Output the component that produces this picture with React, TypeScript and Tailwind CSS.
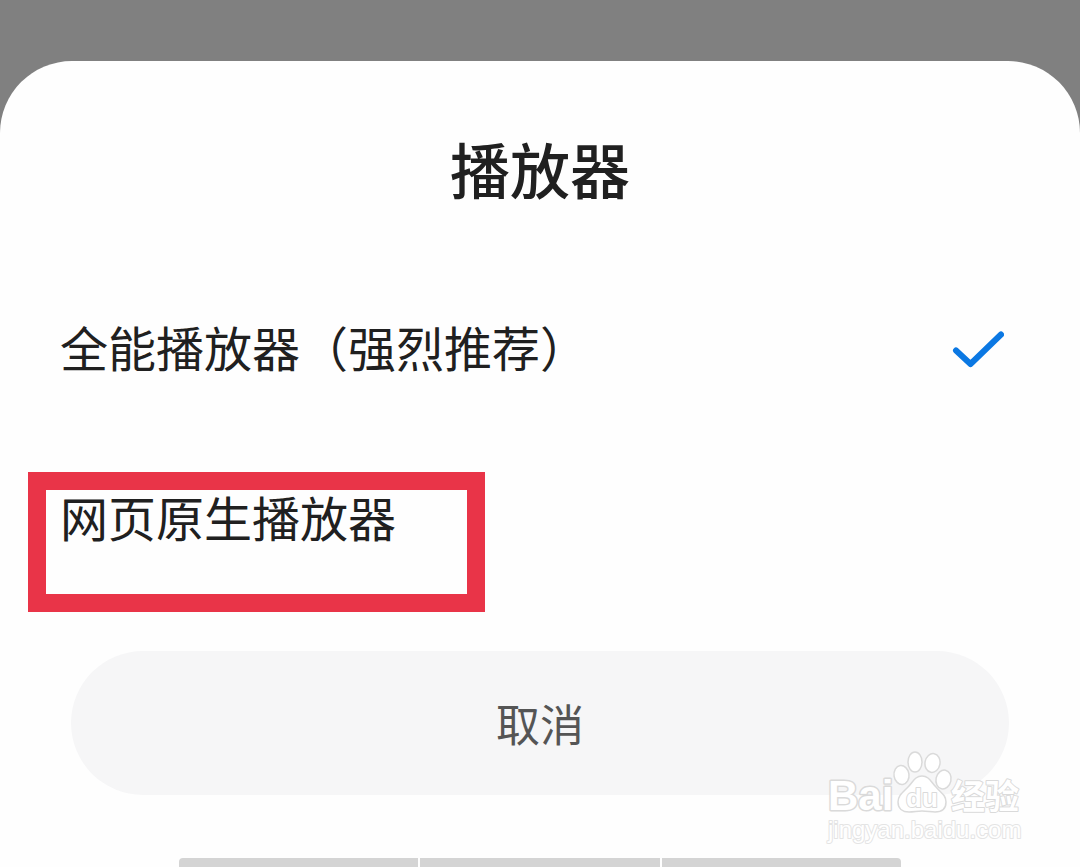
import { useState } from "react";

const PLAYERS = [
  { id: "universal", label: "全能播放器（强烈推荐）" },
  { id: "native", label: "网页原生播放器", highlighted: true },
];

function CheckIcon() {
  return (
    <svg viewBox="0 0 52 44" className="h-11 w-[52px] shrink-0" fill="none" aria-hidden="true">
      <path
        d="M4 26.500 L18.500 40 L49 10.500"
        stroke="#0b78e3"
        strokeWidth="6"
        strokeLinecap="round"
        strokeLinejoin="round"
      />
    </svg>
  );
}

function Watermark() {
  return (
    <svg
      viewBox="0 0 200 100"
      className="pointer-events-none absolute right-[55px] bottom-[19px] h-[100px] w-[200px]"
      fill="#ffffff"
      stroke="#dadada"
      strokeWidth="1.500"
      strokeLinejoin="round"
      aria-hidden="true"
    >
      <text
        x="3"
        y="62"
        fontSize="42"
        strokeWidth="3"
        paintOrder="stroke"
        className="font-['Liberation_Sans',sans-serif] font-bold"
      >
        Bai
      </text>
      <ellipse cx="76.500" cy="27" rx="7.500" ry="9.500" transform="rotate(-8 76.500 27)" />
      <ellipse cx="90" cy="14" rx="7" ry="10" />
      <ellipse cx="107.500" cy="15" rx="7.500" ry="9.500" transform="rotate(10 107.500 15)" />
      <ellipse cx="118.500" cy="31.500" rx="7.500" ry="9.500" transform="rotate(12 118.500 31.500)" />
      <path d="M97 28 C90 28 88 34 83 39 C77 45 73 48 73 54 C73 61 78 64 84 64 C89 64 92 63 97 63 C102 63 106 64 110 64 C117 64 121 61 121 54 C121 47 116 45 111 39 C106 34 104 28 97 28 Z" />
      <text
        x="81"
        y="59"
        fontSize="26"
        strokeWidth="2"
        paintOrder="stroke"
        className="font-['Liberation_Sans',sans-serif] font-bold"
      >
        du
      </text>
      <text
        x="126"
        y="61"
        fontSize="34"
        strokeWidth="2"
        paintOrder="stroke"
        className="font-['Noto_Sans_CJK_SC',sans-serif] font-bold"
      >
        经验
      </text>
      <text
        x="3"
        y="90"
        fontSize="24"
        stroke="#e4e4e4"
        strokeWidth="2"
        paintOrder="stroke"
        className="font-['Liberation_Sans',sans-serif]"
      >
        jingyan.baidu.com
      </text>
    </svg>
  );
}

export default function App() {
  const [selected, setSelected] = useState("universal");

  return (
    <div className="flex min-h-screen flex-col bg-[#808080] pt-[61px] font-['Noto_Sans_CJK_SC',sans-serif] text-[#202020]">
      <main className="relative flex flex-1 flex-col rounded-t-[72px] bg-[#fefefe] pt-[62px]">
        <h1 className="text-center text-[60px] leading-[90px] font-medium">播放器</h1>

        <fieldset className="mt-12" aria-label="播放器">
          {PLAYERS.map((player) => (
            <label
              key={player.id}
              className="relative flex h-[170px] cursor-pointer items-center justify-between pr-[76px] pl-[60px] text-5xl"
            >
              <input
                type="radio"
                name="player"
                value={player.id}
                checked={selected === player.id}
                onChange={() => setSelected(player.id)}
                className="sr-only"
              />
              <span>{player.label}</span>
              {selected === player.id && <CheckIcon />}
              {player.highlighted && (
                <span className="pointer-events-none absolute top-[41px] left-7 h-[140px] w-[457px] border-[18px] border-[#e93448]" />
              )}
            </label>
          ))}
        </fieldset>

        <button
          type="button"
          className="mx-[71px] mt-[50px] h-36 rounded-full bg-[#f6f6f7] text-[44px] text-[#555555]"
        >
          取消
        </button>

        {/* bottom gesture bar */}
        <div className="mx-[179px] mt-auto flex h-[9px] gap-[2px] overflow-hidden rounded-t-sm">
          <div className="flex-1 bg-[#d4d4d4]" />
          <div className="flex-1 bg-[#d4d4d4]" />
          <div className="flex-1 bg-[#d4d4d4]" />
        </div>

        <Watermark />
      </main>
    </div>
  );
}
